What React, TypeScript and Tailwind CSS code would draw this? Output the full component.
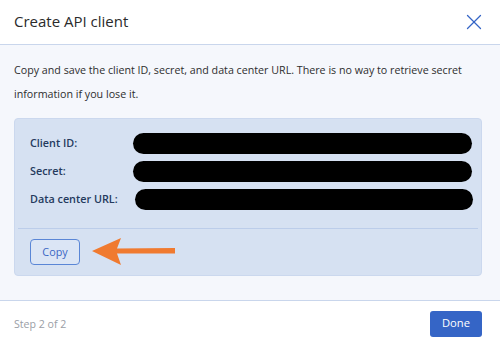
import { X } from "lucide-react";

const rows = [
  { label: "Client ID:", bar: "ml-0 mr-[9px]" },
  { label: "Secret:", bar: "ml-0 mr-[9px]" },
  { label: "Data center URL:", bar: "ml-[2px] mr-[8px]" },
];

const App = () => {
  return (
    <div
      className="w-[500px] h-[344px] flex flex-col bg-white overflow-hidden"
      style={{ fontFamily: '"Open Sans", "Noto Sans", sans-serif' }}
    >
      {/* header */}
      <div className="h-[45px] flex items-center justify-between pl-[14px] pr-[13px] border-b border-[#c9d6ec] shrink-0">
        <div className="text-[15px] text-[#2b2b2b] leading-none pb-[1px]">Create API client</div>
        <X size={26} strokeWidth={1.2} color="#3565c6" />
      </div>

      {/* body */}
      <div className="flex-1 bg-[#f5f7fc] pl-[14px] pr-[18px] pt-[13px] border-b border-[#c9d6ec]">
        <p className="text-[10.7px] leading-[24px] text-[#2e2e2e]">
          Copy and save the client ID, secret, and data center URL. There is no way to retrieve secret
          information if you lose it.
        </p>

        <div className="mt-[12px] bg-[#d6e1f2] rounded-[4px] border border-[#cbd8ee]">
          <div className="flex flex-col gap-[7px] pt-[14px] pb-[18px]">
            {rows.map((r) => (
              <div key={r.label} className="h-[21px] flex items-center pl-[15px]">
                <span className="w-[103px] text-[10.8px] font-semibold text-[#243a5e]">{r.label}</span>
                <div className={`flex-1 h-[21px] rounded-full bg-black ${r.bar}`} />
              </div>
            ))}
          </div>
          <div className="mx-[3px] border-t border-[#bccdea]" />
          <div className="flex items-center h-[46px] pl-[15px]">
            <button className="w-[50px] h-[26px] rounded-[4px] border border-[#5a86d6] text-[10.8px] text-[#3a66c4] bg-[#dbe5f5]">
              Copy
            </button>
            <svg width="86" height="30" viewBox="0 0 86 30" className="ml-[12px]">
              <path d="M0 14 L29 1 L25 11.5 L83 11 L83 16.5 L25 16.5 L29 28 Z" fill="#f07a30" />
            </svg>
          </div>
        </div>
      </div>

      {/* footer */}
      <div className="h-[43px] flex items-center justify-between pl-[14px] pr-[18px] shrink-0">
        <span className="text-[10.6px] text-[#9a9ea6] mt-[4px]">Step 2 of 2</span>
        <button className="w-[52px] h-[26px] mt-[2px] rounded-[3px] bg-[#3565c6] text-white text-[11.2px]">Done</button>
      </div>
    </div>
  );
};

export default App;
